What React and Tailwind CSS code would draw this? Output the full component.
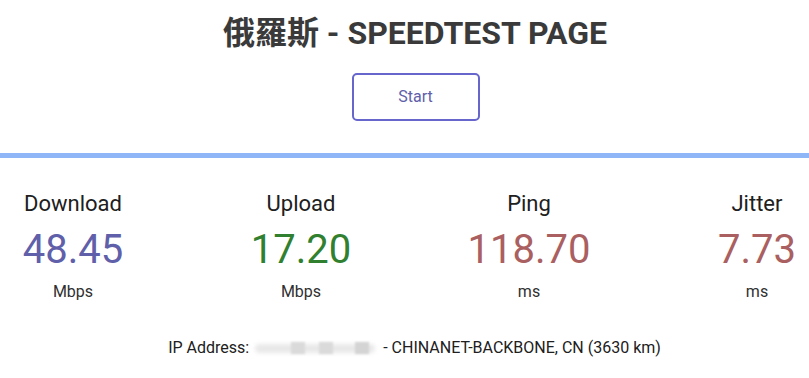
export default function App() {
  const cols = [
    { name: "Download", value: "48.45", unit: "Mbps", color: "text-[#6060aa]" },
    { name: "Upload", value: "17.20", unit: "Mbps", color: "text-[#308030]" },
    { name: "Ping", value: "118.70", unit: "ms", color: "text-[#aa6060]" },
    { name: "Jitter", value: "7.73", unit: "ms", color: "text-[#aa6060]" },
  ];
  return (
    <div className="w-[809px] h-[378px] overflow-hidden bg-white font-['Roboto','Noto_Sans_CJK_TC',sans-serif]">
      <h1 className="pt-[13px] h-[40px] box-content text-center text-[32px] leading-[40px] font-bold text-[#3a3a3a] pl-[21px] font-['Roboto','Noto_Sans_CJK_TC',sans-serif]">
        俄羅斯 - SPEEDTEST PAGE
      </h1>
      <div className="flex justify-center mt-[20px] pl-[22px]">
        <div className="w-[128px] h-[48px] border-2 border-[#6666cc] rounded-[5px] flex items-center justify-center text-[16px] text-[#6060aa]">
          Start
        </div>
      </div>
      <div className="mt-[32px] h-[5px] bg-[#8fb6f6]" />
      <div className="flex ml-[-41px] w-[912px] mt-[32px]">
        {cols.map((c) => (
          <div key={c.name} className="w-[228px] shrink-0 flex flex-col items-center">
            <div className="text-[22px] leading-[28px] text-[#202020]">{c.name}</div>
            <div className={`text-[40px] leading-[50px] mt-[7px] ${c.color}`}>{c.value}</div>
            <div className="text-[16px] leading-[20px] mt-[7px] text-[#303030]">{c.unit}</div>
          </div>
        ))}
      </div>
      <div className="mt-[36px] flex justify-center items-center text-[16px] leading-[20px] text-[#202020] pl-[20px]">
        <span>IP Address:</span>
        <span className="relative inline-block w-[130px] h-[16px] mx-[2px]">
          <span className="absolute left-[4px] top-[4px] w-[120px] h-[9px] rounded-full bg-[#e8e8e8] blur-[2px]" />
          <span className="absolute left-[40px] top-[2px] w-[14px] h-[12px] bg-[#dadada] blur-[1px]" />
          <span className="absolute left-[68px] top-[2px] w-[14px] h-[12px] bg-[#dadada] blur-[1px]" />
          <span className="absolute left-[104px] top-[2px] w-[14px] h-[12px] bg-[#d4d4d4] blur-[1px]" />
        </span>
        <span>- CHINANET-BACKBONE, CN (3630 km)</span>
      </div>
    </div>
  );
}
